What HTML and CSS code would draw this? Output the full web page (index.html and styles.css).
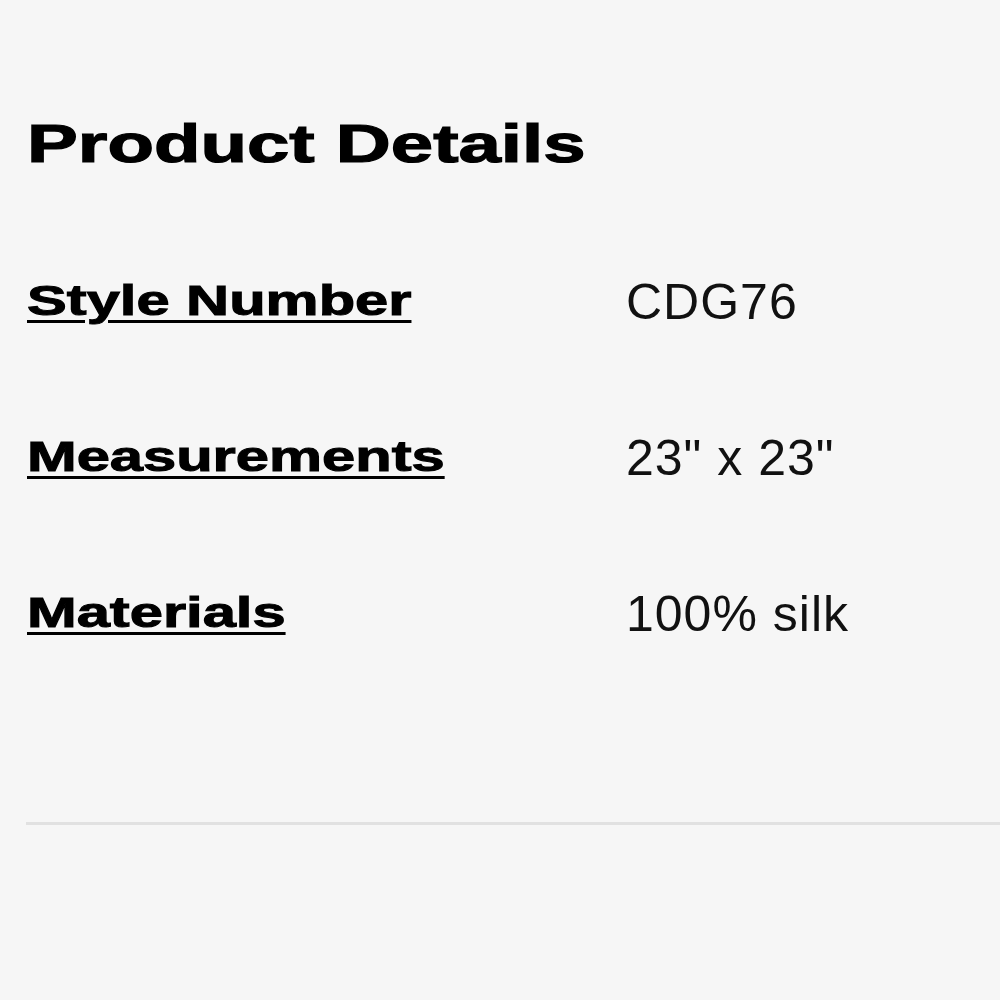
FILE: index.html
```html
<!DOCTYPE html>
<html lang="en">
<head>
<meta charset="utf-8">
<title>Product Details</title>
<link rel="stylesheet" href="styles.css">
</head>
<body>
<section class="details">
  <h1 class="details-title"><span class="wide">Product Details</span></h1>
  <dl class="specs">
    <dt class="spec-label"><span class="wide">Style Number</span></dt>
    <dd class="spec-value">CDG76</dd>
    <dt class="spec-label"><span class="wide">Measurements</span></dt>
    <dd class="spec-value">23" x 23"</dd>
    <dt class="spec-label"><span class="wide">Materials</span></dt>
    <dd class="spec-value">100% silk</dd>
  </dl>
  <hr class="divider">
</section>
</body>
</html>
```
FILE: styles.css
```css
html, body {
  margin: 0;
  padding: 0;
  background: #f6f6f6;
}

body {
  font-family: "Liberation Sans", Arial, Helvetica, sans-serif;
  color: #000;
  overflow: hidden;
}

.details {
  padding: 116px 0 0 27px;
}

.details-title {
  margin: 0;
  font-size: 54px;
  line-height: 54px;
  font-weight: 700;
  -webkit-text-stroke: 1.2px #000;
}

.wide {
  display: inline-block;
  transform: scaleX(1.41);
  transform-origin: left center;
  white-space: nowrap;
}

.specs {
  margin: 107px 0 0 0;
  display: grid;
  grid-template-columns: 599px 1fr;
  grid-auto-rows: 156px;
  align-items: start;
}

.spec-label {
  margin: 0;
  padding-top: 3px;
  font-size: 42px;
  line-height: 42px;
  font-weight: 700;
  -webkit-text-stroke: 1px #000;
}

.spec-label .wide {
  transform: scaleX(1.42);
  text-decoration: underline;
  text-decoration-thickness: 3px;
  text-underline-offset: 5px;
}

.spec-value {
  margin: 0;
  font-size: 50px;
  line-height: 50px;
  letter-spacing: 1px;
  color: #111;
}

.divider {
  margin: 77px 0 0 -1px;
  border: 0;
  height: 3px;
  background: #e1e1e1;
}
```
